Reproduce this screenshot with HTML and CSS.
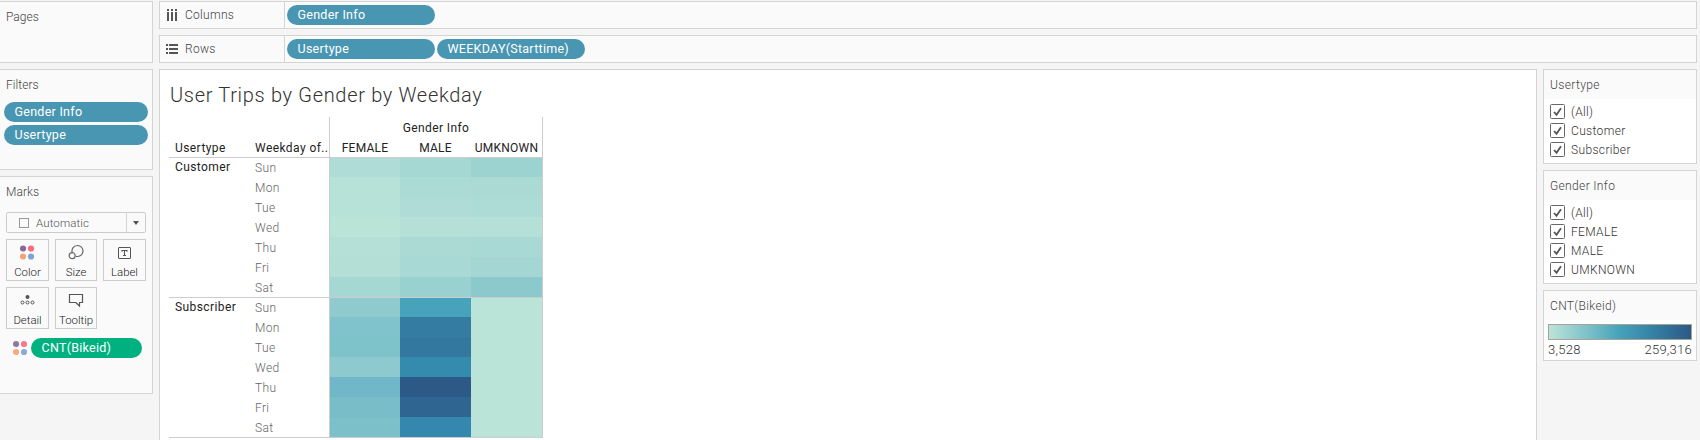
FILE: index.html
```html
<!DOCTYPE html>
<html lang="en">
<head>
<meta charset="utf-8">
<title>User Trips by Gender by Weekday</title>
<link rel="stylesheet" href="styles.css">
</head>
<body>
<div class="app">
  <aside class="side">
    <section class="panel pages"><h2>Pages</h2></section>
    <section class="panel filters">
      <h2>Filters</h2>
      <div class="pill">Gender Info</div>
      <div class="pill">Usertype</div>
    </section>
    <section class="panel marks">
      <h2>Marks</h2>
      <div class="select"><i class="square"></i><span>Automatic</span><b><i class="caret"></i></b></div>
      <div class="buttons">
        <div class="btn">
          <svg width="16" height="16"><circle cx="3" cy="4.5" r="3.1" fill="#856c98"/><circle cx="11" cy="4.5" r="3.1" fill="#fb6b7c"/><circle cx="3" cy="12.5" r="3.1" fill="#f6a274"/><circle cx="11" cy="12.5" r="3.1" fill="#7fa3cf"/></svg>
          <span>Color</span></div>
        <div class="btn">
          <svg width="16" height="16" fill="none" stroke="#666" stroke-width="1.2"><path d="M4.1 8.2A5.5 5.5 0 1 1 8 12.3"/><circle cx="4.2" cy="11.7" r="3"/></svg>
          <span>Size</span></div>
        <div class="btn">
          <svg width="16" height="16" fill="none" stroke="#555"><rect x="1.5" y="3.5" width="12" height="11" rx=".5"/><path d="M5 7.7V6.5H10V7.7M7.5 6.5V11.5M6 11.5H9" stroke-width="1.1"/></svg>
          <span>Label</span></div>
        <div class="btn">
          <svg width="16" height="16" fill="none" stroke="#555"><circle cx="7.5" cy="5" r="2" fill="#555" stroke="none"/><circle cx="2.5" cy="10.5" r="1.5"/><circle cx="7.5" cy="10.5" r="1.5"/><circle cx="12.5" cy="10.5" r="1.5"/></svg>
          <span>Detail</span></div>
        <div class="btn">
          <svg width="16" height="16" fill="none" stroke="#555" stroke-width="1.2"><path d="M1.5 2.5H14.5V10.5H11.5V14L7.8 10.5H1.5Z"/></svg>
          <span>Tooltip</span></div>
      </div>
      <div class="encoding">
        <svg width="16" height="16" opacity=".9"><circle cx="3" cy="4" r="3.1" fill="#856c98"/><circle cx="11" cy="4" r="3.1" fill="#fb6b7c"/><circle cx="3" cy="12" r="3.1" fill="#f6a274"/><circle cx="11" cy="12" r="3.1" fill="#7fa3cf"/></svg>
        <div class="pill green">CNT(Bikeid)</div>
      </div>
    </section>
  </aside>

  <main class="main">
    <div class="shelf">
      <div class="shelf-name">
        <svg width="12" height="12" fill="#555"><path d="M1 0h2v2H1zM5 0h2v2H5zM9 0h2v2H9zM1 3h2v9H1zM5 3h2v9H5zM9 3h2v9H9z"/></svg>
        <span>Columns</span></div>
      <div class="pill">Gender Info</div>
    </div>
    <div class="shelf">
      <div class="shelf-name">
        <svg width="12" height="12" fill="#555"><path d="M0 1h2v2H0zM0 5h2v2H0zM0 9h2v2H0zM3 1h9v2H3zM3 5h9v2H3zM3 9h9v2H3z"/></svg>
        <span>Rows</span></div>
      <div class="pill">Usertype</div>
      <div class="pill">WEEKDAY(Starttime)</div>
    </div>
    <div class="work">
      <section class="canvas">
        <h1>User Trips by Gender by Weekday</h1>
        <div class="viz">
          <div class="row-heads"><span>Usertype</span><span>Weekday of..</span></div>
          <div class="col-heads">
            <div class="col-title">Gender Info</div>
            <div class="cols"><span>FEMALE</span><span>MALE</span><span>UMKNOWN</span></div>
          </div>
          <div class="group">Customer</div>
          <div class="days"><span>Sun</span><span>Mon</span><span>Tue</span><span>Wed</span><span>Thu</span><span>Fri</span><span>Sat</span></div>
          <div class="heat">
            <i style="background:#b0dcd7"></i><i style="background:#a6d8d3"></i><i style="background:#9cd3d1"></i>
            <i style="background:#b6e2d7"></i><i style="background:#acdbd6"></i><i style="background:#abdad5"></i>
            <i style="background:#b6e2d7"></i><i style="background:#afdcd7"></i><i style="background:#addbd6"></i>
            <i style="background:#b9e4d7"></i><i style="background:#b4e0d7"></i><i style="background:#b4e0d7"></i>
            <i style="background:#b4e0d7"></i><i style="background:#abdad5"></i><i style="background:#a8d9d4"></i>
            <i style="background:#b3dfd7"></i><i style="background:#a8d9d4"></i><i style="background:#a4d7d3"></i>
            <i style="background:#a5d8d3"></i><i style="background:#99d1d0"></i><i style="background:#8bc9cd"></i>
          </div>
          <div class="group">Subscriber</div>
          <div class="days"><span>Sun</span><span>Mon</span><span>Tue</span><span>Wed</span><span>Thu</span><span>Fri</span><span>Sat</span></div>
          <div class="heat ruled">
            <i style="background:#8fcacf"></i><i style="background:#47a2bb"></i><i style="background:#bbe4d9"></i>
            <i style="background:#81c3cc"></i><i style="background:#357ca2"></i><i style="background:#bbe4d8"></i>
            <i style="background:#7ec2ca"></i><i style="background:#32789f"></i><i style="background:#bbe4d8"></i>
            <i style="background:#8dc9cf"></i><i style="background:#358bae"></i><i style="background:#bbe4d9"></i>
            <i style="background:#70b8c9"></i><i style="background:#2c5985"></i><i style="background:#b9e4d7"></i>
            <i style="background:#78bdc8"></i><i style="background:#2f6691"></i><i style="background:#b9e4d7"></i>
            <i style="background:#7cc0ca"></i><i style="background:#3487ae"></i><i style="background:#bae4d8"></i>
          </div>
        </div>
      </section>
      <aside class="cards">
        <section class="card">
          <h3>Usertype</h3>
          <ul>
            <li><svg width="15" height="15"><rect x=".5" y=".5" width="14" height="14" rx="1"/><path d="M4 8L6.5 10.7L11 4.2"/></svg>(All)</li>
            <li><svg width="15" height="15"><rect x=".5" y=".5" width="14" height="14" rx="1"/><path d="M4 8L6.5 10.7L11 4.2"/></svg>Customer</li>
            <li><svg width="15" height="15"><rect x=".5" y=".5" width="14" height="14" rx="1"/><path d="M4 8L6.5 10.7L11 4.2"/></svg>Subscriber</li>
          </ul>
        </section>
        <section class="card">
          <h3>Gender Info</h3>
          <ul>
            <li><svg width="15" height="15"><rect x=".5" y=".5" width="14" height="14" rx="1"/><path d="M4 8L6.5 10.7L11 4.2"/></svg>(All)</li>
            <li><svg width="15" height="15"><rect x=".5" y=".5" width="14" height="14" rx="1"/><path d="M4 8L6.5 10.7L11 4.2"/></svg>FEMALE</li>
            <li><svg width="15" height="15"><rect x=".5" y=".5" width="14" height="14" rx="1"/><path d="M4 8L6.5 10.7L11 4.2"/></svg>MALE</li>
            <li><svg width="15" height="15"><rect x=".5" y=".5" width="14" height="14" rx="1"/><path d="M4 8L6.5 10.7L11 4.2"/></svg>UMKNOWN</li>
          </ul>
        </section>
        <section class="card legend">
          <h3>CNT(Bikeid)</h3>
          <div class="ramp"></div>
          <div class="range"><span>3,528</span><span>259,316</span></div>
        </section>
      </aside>
    </div>
  </main>
</div>
</body>
</html>
```
FILE: styles.css
```css
* { box-sizing: border-box; margin: 0; padding: 0; }
body {
  width: 1700px; height: 440px; overflow: hidden;
  background: #f5f5f5; color: #444;
  font: 350 12px/16px Roboto, "Open Sans", sans-serif;
  letter-spacing: .3px;
}
svg { display: block; flex: none; }
.app { display: flex; gap: 6px; height: 440px; padding-top: 1px; }

.side { width: 153px; display: flex; flex-direction: column; gap: 6px; }
.panel { background: #fafafa; border: 1px solid #d4d4d4; border-left: 0; padding: 7px 4px 0 4px; }
.panel h2 { font-size: 12px; font-weight: 350; line-height: 16px; padding-left: 2px; letter-spacing: .05px; }
.pages { height: 62px; }
.filters { height: 101px; }
.marks { height: 218px; }
.filters h2 { margin-bottom: 9px; }

.pill {
  height: 20px; border-radius: 10px; background: #4996b2; color: #fff;
  font-size: 12.5px; font-weight: 450; line-height: 20px; padding-left: 10.5px; letter-spacing: .27px;
}
.filters .pill { width: 144px; margin-bottom: 3px; }
.pill.green { background: #00b180; width: 111px; }

.select {
  display: flex; align-items: center; height: 21px; margin: 12px 2px 6px;
  border: 1px solid #ccc; border-radius: 2px; font-size: 11.5px; letter-spacing: .1px; color: #555;
}
.select .square { width: 10px; height: 10px; border: 1px solid #999; margin: 0 7px 0 12px; }
.select b { margin-left: auto; width: 19px; height: 19px; border-left: 1px solid #d4d4d4; display: flex; align-items: center; justify-content: center; }
.caret { border: 3.5px solid transparent; border-top: 4px solid #555; border-bottom: 0; }
.buttons { display: grid; grid-template-columns: 43px 42px 43px; gap: 6px; margin-left: 2px; }
.btn {
  height: 42px; border: 1px solid #ccc; display: flex; flex-direction: column; align-items: center;
  padding-top: 4px; font-size: 11.4px; letter-spacing: 0; color: #222;
}
.btn span { line-height: 14px; margin-top: 5px; }
.encoding { display: flex; align-items: center; gap: 2px; padding-left: 9px; margin-top: 9px; }

.main { flex: none; width: 1538px; display: flex; flex-direction: column; gap: 6px; }
.shelf { display: flex; align-items: center; gap: 2px; height: 28px; flex: none; border: 1px solid #d4d4d4; background: #fafafa; }
.shelf-name { display: flex; align-items: center; gap: 7px; width: 125px; height: 26px; padding-left: 6px; border-right: 1px solid #d4d4d4; }
.shelf .pill { width: 148px; }
.work { flex: 1; display: flex; gap: 6px; min-height: 0; }

.canvas { width: 1378px; height: 380px; background: #fff; border: 1px solid #d4d4d4; padding: 13px 0 0 9px; flex: none; }
h1 { font-weight: 300; font-size: 20px; line-height: 24px; letter-spacing: .68px; padding-left: 1px; color: #333; }
.viz {
  display: grid; grid-template-columns: 68px 92px 214px; grid-template-rows: 40px 140px 141px;
  width: 374px; margin-top: 10px; letter-spacing: .3px; color: #222;
}
.row-heads { grid-column: span 2; display: grid; grid-template-columns: 80px 80px; align-items: end; padding: 0 0 1px 6px; font-weight: 450; letter-spacing: .42px; white-space: nowrap; }
.col-heads { border: solid #ccc; border-width: 0 1px; text-align: center; padding-top: 3px; font-weight: 400; }
.col-title { letter-spacing: .4px; }
.cols { display: grid; grid-template-columns: 70px 71px 71px; margin-top: 4px; letter-spacing: .25px; }
.group { border-top: 1px solid #ccc; padding: 1px 0 0 6px; font-weight: 450; letter-spacing: .4px; }
.days { border-top: 1px solid #ccc; padding-left: 18px; color: #666; display: grid; grid-auto-rows: 20px; line-height: 20px; letter-spacing: .35px; }
.heat { border: 1px solid #ccc; border-bottom: 0; display: grid; grid-template-columns: 70px 71px 71px; grid-template-rows: 19px repeat(6, 20px); }
.group:nth-last-child(3), .days:nth-last-child(2), .ruled { border-bottom: 1px solid #ccc; }

.cards { width: 154px; display: flex; flex-direction: column; gap: 6px; }
.card { border: 1px solid #d4d4d4; background: #fff; }
.card h3 { height: 29px; background: #fafafa; font-weight: 350; font-size: 12px; line-height: 30px; padding-left: 6px; letter-spacing: .35px; }
.card ul { list-style: none; padding: 3px 0 4px 6px; }
.card li { display: flex; align-items: center; gap: 6px; height: 19px; letter-spacing: .35px; color: #333; }
.card li svg { fill: #fff; stroke: #666; }
.card li path { fill: none; stroke: #555; stroke-width: 1.8; }
.legend { height: 71px; }
.ramp { width: 144px; height: 16px; margin: 4px 0 0 4px; border: 1px solid #aaa297; background: linear-gradient(90deg, #bce4d8, #81c4cb 25%, #45a2b9 50%, #347ea4 75%, #2c5985); }
.range { display: flex; justify-content: space-between; width: 144px; margin: 2px 0 0 4px; font-size: 13px; letter-spacing: .25px; color: #333; }
```
